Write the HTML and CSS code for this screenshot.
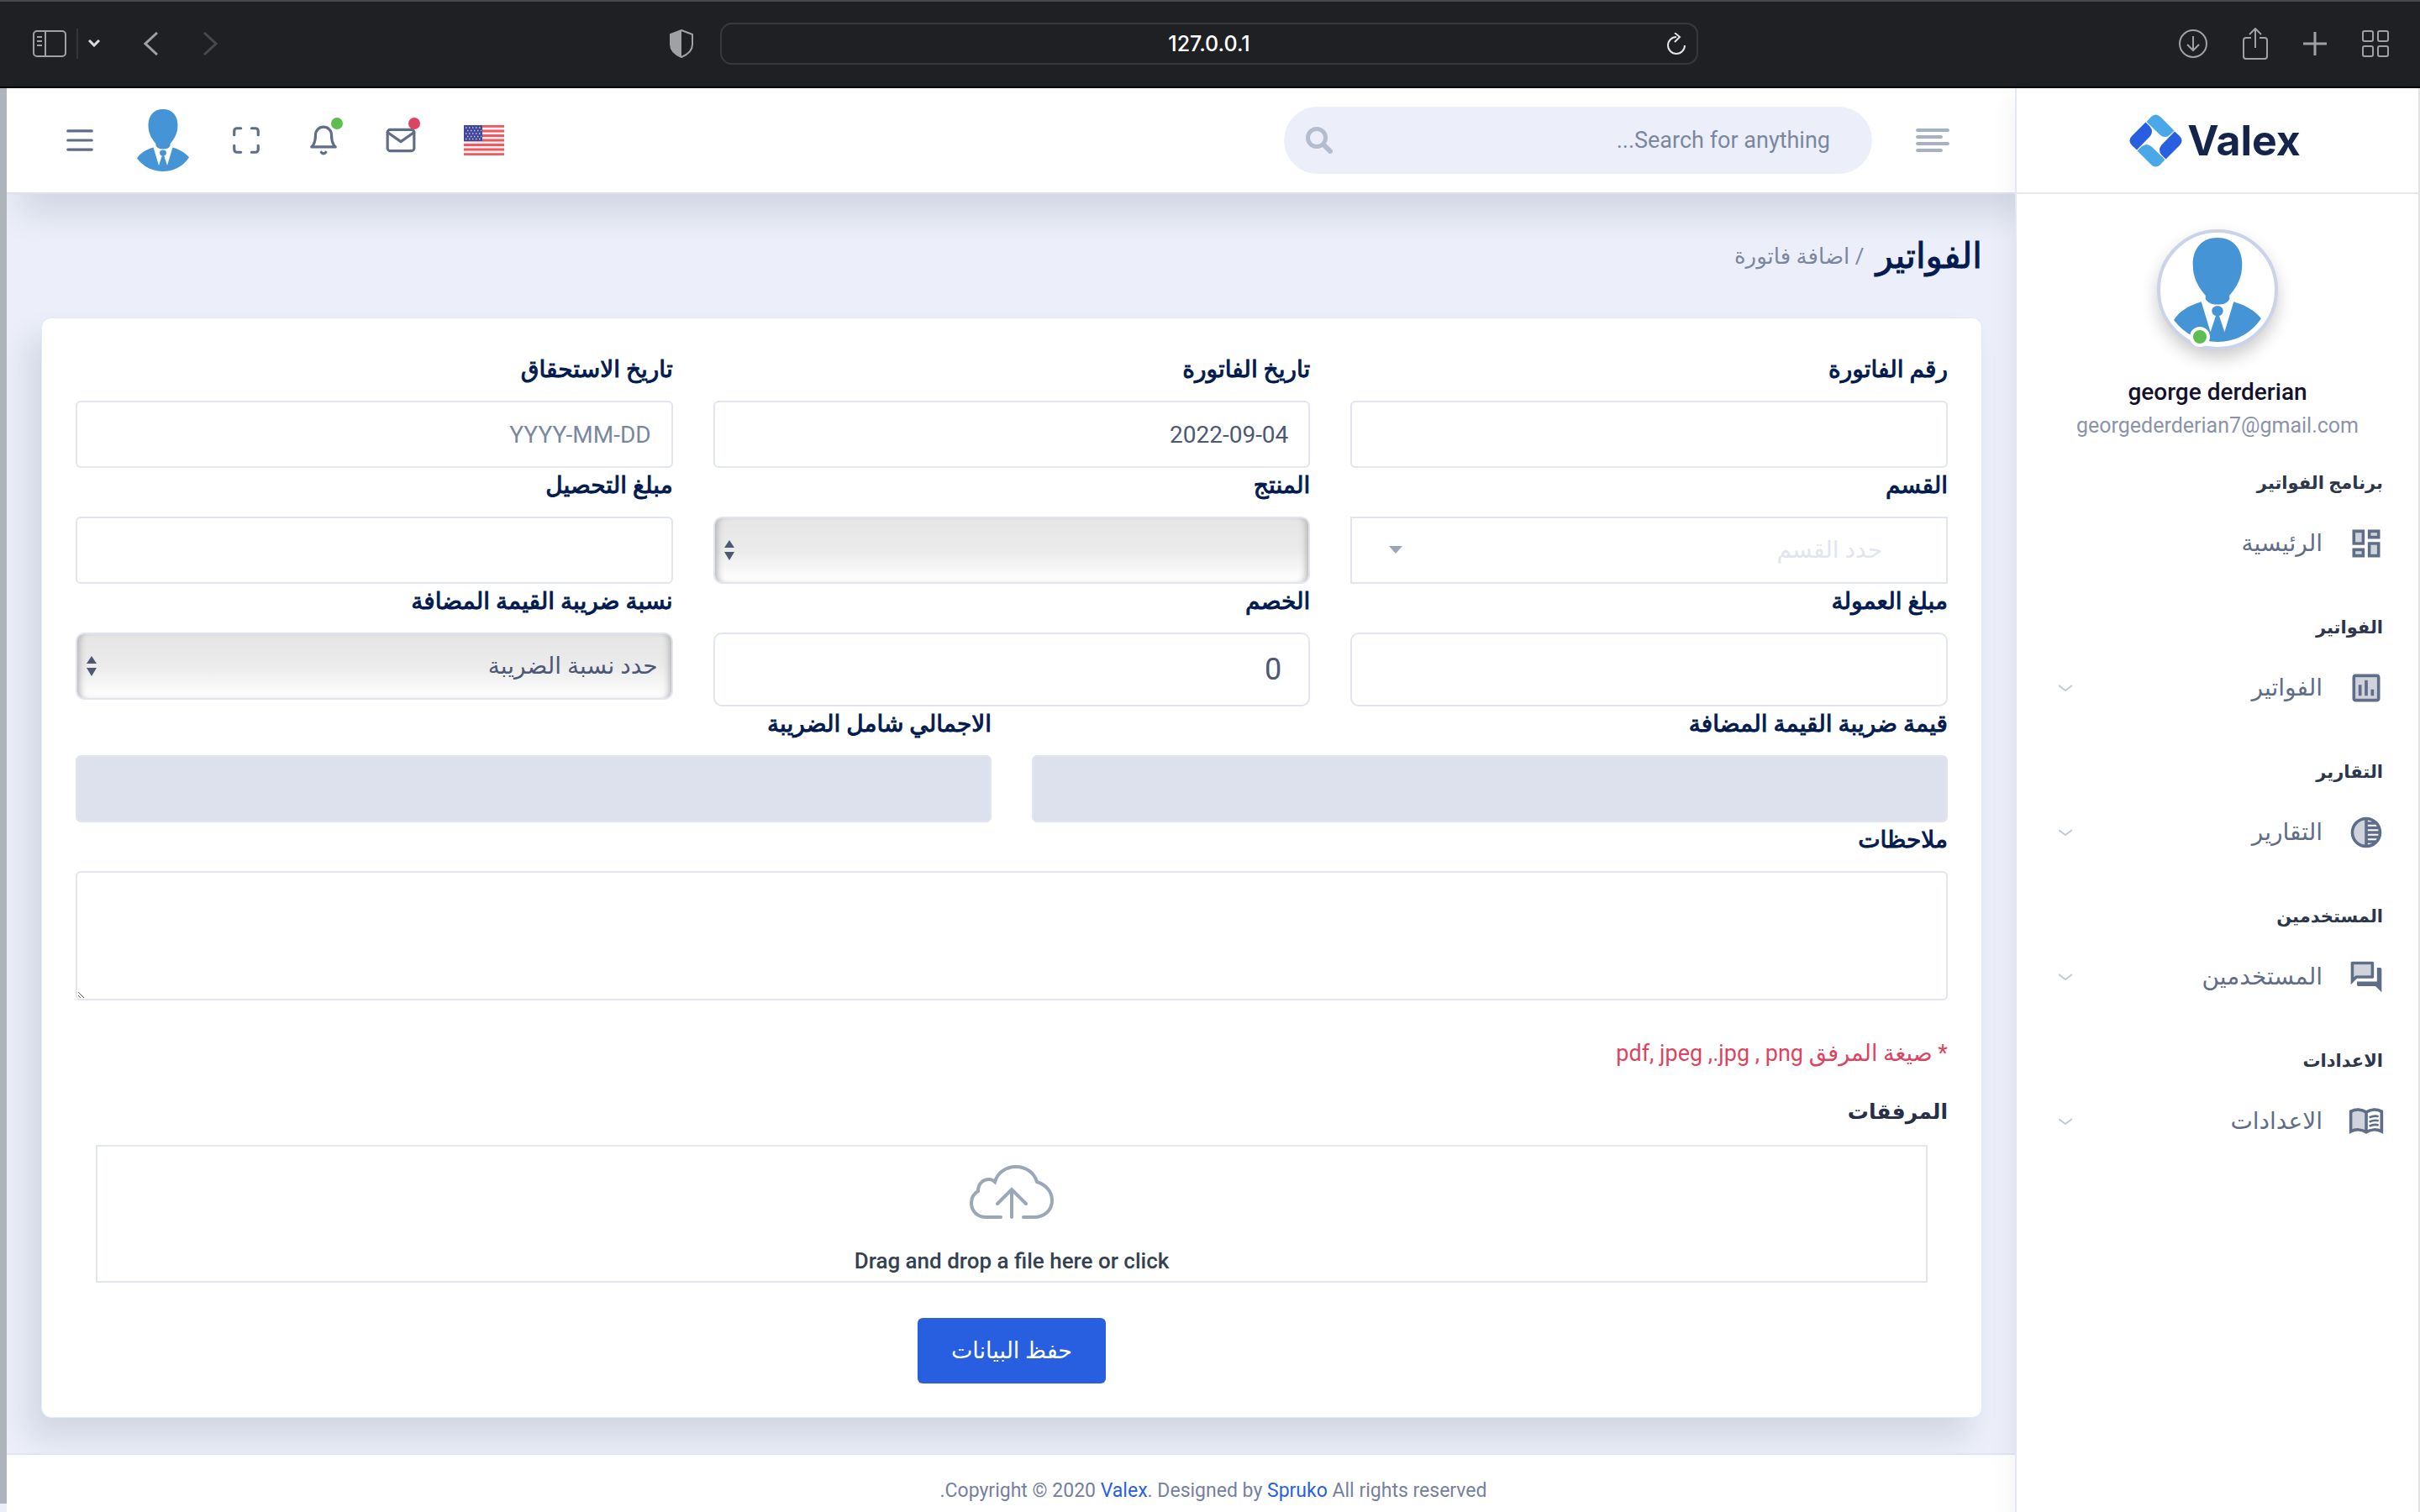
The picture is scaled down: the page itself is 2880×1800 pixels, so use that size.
FILE: index.html
```html
<!DOCTYPE html>
<html lang="ar" dir="rtl">
<head>
<meta charset="utf-8">
<meta name="viewport" content="width=device-width, initial-scale=1">
<title>اضافة فاتورة</title>
<link rel="stylesheet" href="styles.css">
</head>
<body>
<svg class="defs" aria-hidden="true">
  <defs>
    <symbol id="person" viewBox="0 0 62 74">
      <path fill="#4494d6" d="M31 0C42 0 48.500 7.500 48.500 19C48.500 28 45 35 39.500 41V43.500C38 46.500 35 47.500 31 47.500C27 47.500 24 46 22.500 43.500V41C17 35 13.500 28 13.500 19C13.500 7.500 20 0 31 0ZM19.500 45.500L26 67L29.800 55.500C28 55 27 53.500 27 52C27 50 28.500 48.500 31 48.500C33.500 48.500 35 50 35 52C35 53.500 34 55 32.200 55.500L36 67L42.500 45.500C51 48 58 52 62 57.500C54 69 43 74 31 74C19 74 8 69 0 58.500C4 52 11 48 19.500 45.500Z"/>
    </symbol>
    <symbol id="chevron" viewBox="0 0 16 8"><path fill="none" stroke="#c0cadb" stroke-width="2" d="M0 1L8 7L16 1"/></symbol>
    <symbol id="updown" viewBox="0 0 12 24"><path fill="#4d5875" d="M6 0L12 9H0ZM6 24L12 14H0Z"/></symbol>
  </defs>
</svg>

<div class="browser" dir="ltr">
  <div class="browser-start">
    <button class="bare" aria-label="Sidebar"><svg width="40" height="32" viewBox="0 0 40 32" fill="none" stroke="#a0a1a3" stroke-width="2"><rect x="1" y="1" width="38" height="30" rx="4"/><path d="M15 1V31M5 8H11M5 13H11M5 18H11"/></svg></button>
    <span class="browser-rule"></span>
    <button class="bare" aria-label="Tab groups"><svg width="14" height="9" viewBox="0 0 14 9" fill="none" stroke="#dcdcdd" stroke-width="3"><path d="M1 1L7 7L13 1"/></svg></button>
    <button class="bare back" aria-label="Back"><svg width="17" height="28" viewBox="0 0 17 28" fill="none" stroke="#a0a1a3" stroke-width="3"><path d="M16 1L2 14L16 27"/></svg></button>
    <button class="bare forward" aria-label="Forward"><svg width="17" height="28" viewBox="0 0 17 28" fill="none" stroke="#48494c" stroke-width="3"><path d="M1 1L15 14L1 27"/></svg></button>
  </div>
  <div class="browser-middle">
    <svg width="28" height="34" viewBox="0 0 28 34"><path fill="none" stroke="#a0a1a3" stroke-width="2" d="M14 1L27 6V18C27 26 21 30 14 33C7 30 1 26 1 18V6Z"/><path fill="#a0a1a3" d="M14 1V33C7 30 1 26 1 18V6Z"/></svg>
    <div class="address">
      <span>127.0.0.1</span>
      <button class="bare reload" aria-label="Reload"><svg width="24" height="26" viewBox="0 0 24 26" fill="none" stroke="#e4e4e5" stroke-width="2"><path d="M12 5A10 10 0 1 0 22 15M10 0L16 5L10 11"/></svg></button>
    </div>
  </div>
  <div class="browser-end">
    <button class="bare" aria-label="Downloads"><svg width="34" height="34" viewBox="0 0 34 34" fill="none" stroke="#a0a1a3" stroke-width="2"><circle cx="17" cy="17" r="16"/><path d="M17 8V25M10 18L17 25L24 18"/></svg></button>
    <button class="bare" aria-label="Share"><svg width="30" height="38" viewBox="0 0 30 38" fill="none" stroke="#a0a1a3" stroke-width="2"><path d="M10 12H4Q1 12 1 15V34Q1 37 4 37H26Q29 37 29 34V15Q29 12 26 12H20M15 24V2M8 8L15 1L22 8"/></svg></button>
    <button class="bare" aria-label="New tab"><svg width="28" height="28" viewBox="0 0 28 28" stroke="#a0a1a3" stroke-width="3"><path d="M14 0V28M0 14H28"/></svg></button>
    <button class="bare" aria-label="Tabs"><svg width="32" height="32" viewBox="0 0 32 32" fill="none" stroke="#a0a1a3" stroke-width="2"><rect x="1" y="1" width="12" height="12" rx="2"/><rect x="19" y="1" width="12" height="12" rx="2"/><rect x="1" y="19" width="12" height="12" rx="2"/><rect x="19" y="19" width="12" height="12" rx="2"/></svg></button>
  </div>
</div>

<div class="app">
  <aside class="sidebar">
    <a class="logo" href="#" dir="ltr">
      <svg width="63" height="63" viewBox="0 0 63 63">
        <path fill="#285fe0" d="M19.500 9.500L3 26Q-2 31.500 3 37L9 42.500L24.500 26.500Q29.500 20.500 24.500 14.500Z"/>
        <path fill="#4ba8e8" transform="rotate(90 31.500 31.500)" d="M19.500 9.500L3 26Q-2 31.500 3 37L9 42.500L24.500 26.500Q29.500 20.500 24.500 14.500Z"/>
        <path fill="#285fe0" transform="rotate(180 31.500 31.500)" d="M19.500 9.500L3 26Q-2 31.500 3 37L9 42.500L24.500 26.500Q29.500 20.500 24.500 14.500Z"/>
        <path fill="#4ba8e8" transform="rotate(270 31.500 31.500)" d="M19.500 9.500L3 26Q-2 31.500 3 37L9 42.500L24.500 26.500Q29.500 20.500 24.500 14.500Z"/>
      </svg>
      <span>Valex</span>
    </a>
    <div class="profile">
      <div class="portrait"><svg width="104" height="124"><use href="#person"/></svg><span class="online"></span></div>
      <strong>george derderian</strong>
      <span class="mail">georgederderian7@gmail.com</span>
    </div>
    <nav class="menu">
      <h3>برنامج الفواتير</h3>
      <a href="#"><svg class="menu-icon" viewBox="0 0 24 24"><path opacity=".3" d="M5 5h4v6H5zm10 8h4v6h-4zM5 17h4v2H5zM15 5h4v2h-4z"/><path d="M3 13h8V3H3v10zm2-8h4v6H5V5zm8 16h8V11h-8v10zm2-8h4v6h-4v-6zM13 3v6h8V3h-8zm6 4h-4V5h4v2zM3 21h8v-6H3v6zm2-4h4v2H5v-2z"/></svg><span>الرئيسية</span></a>
      <h3>الفواتير</h3>
      <a href="#"><svg class="menu-icon" viewBox="0 0 24 24"><path opacity=".3" d="M5 5h14v14H5z"/><path d="M19 3H5c-1.100 0-2 .9-2 2v14c0 1.100.9 2 2 2h14c1.100 0 2-.9 2-2V5c0-1.100-.9-2-2-2zm0 16H5V5h14v14zM7 10h2v7H7zm4-3h2v10h-2zm4 6h2v4h-2z"/></svg><span>الفواتير</span><svg class="chevron"><use href="#chevron"/></svg></a>
      <h3>التقارير</h3>
      <a href="#"><svg class="menu-icon" viewBox="0 0 24 24"><path opacity=".3" d="M4 12c0 4.070 3.060 7.440 7 7.930V4.070C7.050 4.560 4 7.930 4 12z"/><path d="M12 2C6.480 2 2 6.480 2 12s4.480 10 10 10 10-4.480 10-10S17.520 2 12 2zm-1 17.930C7.050 19.440 4 16.080 4 12s3.050-7.440 7-7.930v15.860zm2-15.860c1.030.13 2 .45 2.870.93H13v-.93zM13 7h5.240c.25.310.48.650.68 1H13V7zm0 3h6.740c.08.330.15.660.19 1H13v-1zm0 9.930V19h2.870c-.87.480-1.840.8-2.870.93zM18.240 17H13v-1h5.920c-.2.350-.43.690-.68 1zm1.500-3H13v-1h6.930c-.04.340-.11.670-.19 1z"/></svg><span>التقارير</span><svg class="chevron"><use href="#chevron"/></svg></a>
      <h3>المستخدمين</h3>
      <a href="#"><svg class="menu-icon" viewBox="0 0 24 24"><path opacity=".3" d="M15 11V4H4v8.170L5.170 11H6z"/><path d="M21 6h-2v9H6v2c0 .55.45 1 1 1h11l4 4V7c0-.55-.45-1-1-1zm-5 7c.55 0 1-.45 1-1V3c0-.55-.45-1-1-1H3c-.55 0-1 .45-1 1v14l4-4h10zM4 12.170V4h11v7H5.170L4 12.170z"/></svg><span>المستخدمين</span><svg class="chevron"><use href="#chevron"/></svg></a>
      <h3>الاعدادات</h3>
      <a href="#"><svg class="menu-icon" viewBox="0 0 24 24"><path opacity=".3" d="M3 6C6 5 9 5 11 6.500V18C9 17 6 17 3 18Z"/><path fill="none" stroke="#5f6d88" stroke-width="2" d="M2 5.500C5 4 9 4 12 6C15 4 19 4 22 5.500V18.500C19 17 15 17 12 19C9 17 5 17 2 18.500ZM12 6V19"/><path fill="none" stroke="#5f6d88" stroke-width="1.400" d="M14 9.500Q17 8 20 8.800M14 12.300Q17 10.800 20 11.600M14 15.100Q17 13.600 20 14.400"/></svg><span>الاعدادات</span><svg class="chevron"><use href="#chevron"/></svg></a>
    </nav>
  </aside>

  <div class="main">
    <header class="topbar">
      <div class="topbar-search">
        <button class="bare" aria-label="Toggle menu"><svg width="40" height="28" viewBox="0 0 40 28" stroke="#a8b0c7" stroke-width="4" stroke-linecap="round"><path d="M2 2H38M2 10H30M2 18H38M2 26H30"/></svg></button>
        <form class="search">
          <input type="search" aria-label="Search" placeholder="Search for anything...">
          <button class="bare" type="button" aria-label="Search"><svg width="32" height="32" viewBox="0 0 32 32" fill="none" stroke="#b4bdce"><circle cx="13" cy="13" r="10.500" stroke-width="5"/><path stroke-width="6" stroke-linecap="round" d="M22 22L29 29"/></svg></button>
        </form>
      </div>
      <div class="topbar-tools">
        <button class="bare tool-wide" aria-label="Language"><svg width="48" height="36" viewBox="0 0 48 36"><path fill="#fbf3f5" d="M0 0H48V36H0Z"/><path stroke="#f0585e" stroke-width="2.800" d="M0 1.400H48M0 7H48M0 12.500H48M0 18H48M0 23.500H48M0 29H48M0 34.600H48"/><path fill="#41479b" d="M0 0H22V19H0Z"/><path stroke="#c9cbe6" stroke-width="1.500" stroke-dasharray="1.500 2.500" d="M2 3H21M4 6.500H21M2 10H21M4 13.500H21M2 16.500H21"/></svg></button>
        <button class="bare tool" aria-label="Messages"><svg class="feather" viewBox="0 0 24 24"><path d="M4 4h16c1.100 0 2 .9 2 2v12c0 1.100-.9 2-2 2H4c-1.100 0-2-.9-2-2V6c0-1.100.9-2 2-2z"/><path d="M22 6l-10 7L2 6"/></svg><span class="dot dot-red"></span></button>
        <button class="bare tool" aria-label="Notifications"><svg class="feather" viewBox="0 0 24 24"><path d="M18 8A6 6 0 0 0 6 8c0 7-3 9-3 9h18s-3-2-3-9M13.730 21a2 2 0 0 1-3.460 0"/></svg><span class="dot dot-green"></span></button>
        <button class="bare tool" aria-label="Full screen"><svg class="feather" viewBox="0 0 24 24"><path d="M8 3H5a2 2 0 0 0-2 2v3m18 0V5a2 2 0 0 0-2-2h-3m0 18h3a2 2 0 0 0 2-2v-3M3 16v3a2 2 0 0 0 2 2h3"/></svg></button>
        <button class="bare tool-wide" aria-label="Account"><svg width="62" height="74"><use href="#person"/></svg></button>
        <button class="bare tool" aria-label="Panel"><svg class="feather" viewBox="0 0 24 24"><path d="M3 12h18M3 5h18M3 19h18"/></svg></button>
      </div>
    </header>

    <main class="content">
      <div class="heading"><h1>الفواتير</h1><span>/ اضافة فاتورة</span></div>
      <form class="card">
        <div class="row three">
          <div class="field"><label for="number">رقم الفاتورة</label><input id="number" type="text"></div>
          <div class="field"><label for="date">تاريخ الفاتورة</label><input id="date" type="text" value="2022-09-04"></div>
          <div class="field"><label for="due">تاريخ الاستحقاق</label><input id="due" type="text" placeholder="YYYY-MM-DD"></div>
        </div>
        <div class="row three">
          <div class="field"><label for="section">القسم</label><div class="pick"><select id="section" class="section"><option>حدد القسم</option></select><svg class="caret" viewBox="0 0 16 9"><path fill="#99a6b5" d="M0 0H16L8 9Z"/></svg></div></div>
          <div class="field"><label for="product">المنتج</label><div class="pick"><select id="product" class="shaded"><option></option></select><svg class="updown"><use href="#updown"/></svg></div></div>
          <div class="field"><label for="collection">مبلغ التحصيل</label><input id="collection" type="text"></div>
        </div>
        <div class="row three">
          <div class="field"><label for="commission">مبلغ العمولة</label><input id="commission" class="large" type="text"></div>
          <div class="field"><label for="discount">الخصم</label><input id="discount" class="large" type="text" value="0"></div>
          <div class="field"><label for="rate">نسبة ضريبة القيمة المضافة</label><div class="pick"><select id="rate" class="shaded"><option>حدد نسبة الضريبة</option></select><svg class="updown"><use href="#updown"/></svg></div></div>
        </div>
        <div class="row two">
          <div class="field"><label for="vat">قيمة ضريبة القيمة المضافة</label><input id="vat" type="text" readonly></div>
          <div class="field"><label for="total">الاجمالي شامل الضريبة</label><input id="total" type="text" readonly></div>
        </div>
        <div class="field"><label for="note">ملاحظات</label><textarea id="note"></textarea></div>
        <p class="formats">* صيغة المرفق pdf, jpeg ,.jpg , png</p>
        <h2>المرفقات</h2>
        <button class="dropzone" type="button">
          <svg width="100" height="65" viewBox="0 0 100 65" fill="none" stroke="#9aa7b6" stroke-width="4" stroke-linecap="round"><path d="M37 62H20C8 62 2 54 2 45C2 39 5 34 10 31C10 22 16 17 23 17C26 17 28 18 30 20C33 9 43 2 55 2C67 2 77 9 80 20C90 23 98 31 98 42C98 54 89 62 76 62H64M50 62V29M33 46L50 29L67 46"/></svg>
          <span>Drag and drop a file here or click</span>
        </button>
        <button class="save" type="button">حفظ البيانات</button>
      </form>
    </main>

    <footer class="footer" dir="ltr">.Copyright © 2020 <a href="#">Valex</a>. Designed by <a href="#">Spruko</a> All rights reserved</footer>
  </div>
  <div class="scroll-track"><div class="scroll-thumb"></div></div>
</div>
</body>
</html>
```
FILE: styles.css
```css
* { box-sizing: border-box; }
body {
  margin: 0;
  min-height: 100vh;
  display: flex;
  flex-direction: column;
  background: #eceff9;
  color: #031b4e;
  font: 400 28px/42px Roboto, "DejaVu Sans", sans-serif;
}
svg { display: block; flex: none; }
a { text-decoration: none; }
h1, h2, h3, p { margin: 0; }
.defs { position: absolute; width: 0; height: 0; }
input, select, textarea, button { font: inherit; color: inherit; }
.bare { border: 0; padding: 0; background: none; display: flex; align-items: center; justify-content: center; }

/* Browser bar */
.browser {
  display: grid;
  grid-template-columns: 758fr 1224fr 822fr;
  align-items: center;
  height: 105px;
  padding: 0 37px 2px 39px;
  background: #1f2023;
  border-top: 2px solid #47494d;
  border-bottom: 2px solid #000;
}
.browser-start, .browser-middle, .browser-end { display: flex; align-items: center; }
.browser-start { gap: 12px; }
.browser-rule { width: 2px; height: 36px; background: #343538; }
.back { margin-left: 40px; }
.forward { margin-left: 42px; }
.browser-middle { gap: 32px; }
.browser-end { justify-content: flex-end; gap: 42px; }
.address {
  flex: 1;
  display: flex;
  align-items: center;
  justify-content: center;
  position: relative;
  height: 50px;
  border: 2px solid #38393c;
  border-radius: 14px;
  color: #fff;
  font: 500 25px/32px Inter, sans-serif;
}
.reload { position: absolute; right: 12px; }

/* Page frame */
.app { flex: 1; display: flex; background: #fff; }
.scroll-track { width: 8px; flex: none; background: #eceff9; padding-bottom: 10px; }
.scroll-thumb { height: 100%; background: #afb3bc; }
.main { flex: 1; min-width: 0; display: flex; flex-direction: column; background: #eceff9; }

/* Sidebar */
.sidebar {
  width: 482px;
  flex: none;
  position: relative;
  z-index: 2;
  background: #fff;
  border-right: 2px solid #e3e3e6;
  border-left: 2px solid #e4e7f1;
  box-shadow: 0 16px 30px rgba(42, 49, 82, .08);
}
.logo {
  display: flex;
  align-items: center;
  justify-content: center;
  gap: 6px;
  height: 126px;
  padding-right: 6px;
  border-bottom: 2px solid #e6e7f0;
  color: #14244a;
  font: 700 50px/60px Inter, sans-serif;
}
.profile { display: flex; flex-direction: column; align-items: center; padding: 42px 0 28px; text-align: center; }
.portrait {
  position: relative;
  display: flex;
  align-items: center;
  justify-content: center;
  width: 144px;
  height: 144px;
  margin-bottom: 28px;
  border: 4px solid #ccd2e8;
  border-radius: 50%;
  background: #fff;
  box-shadow: 0 10px 20px rgba(0, 0, 0, .2);
}
.online { position: absolute; left: 35px; bottom: 0; width: 24px; height: 24px; border: 4px solid #fff; border-radius: 50%; background: #5dbd4f; }
.profile strong { color: #14112d; font-weight: 500; line-height: 44px; }
.mail { color: #8c93a8; font-size: 25px; line-height: 36px; }
.menu h3 { padding: 0 42px; color: #2c364c; font-size: 21px; font-weight: 700; line-height: 44px; }
.menu a { display: flex; align-items: center; height: 64px; margin: 18px 0 46px; padding: 0 40px 0 50px; color: #5f6d88; }
.menu-icon { width: 44px; height: 44px; margin-left: 30px; fill: #5f6d88; }
.chevron { width: 16px; height: 8px; margin-right: auto; }

/* Header */
.topbar {
  display: flex;
  align-items: center;
  justify-content: space-between;
  height: 126px;
  padding: 0 78px 0 65px;
  background: #fff;
  border-bottom: 2px solid #dee2ee;
  box-shadow: 16px 24px 36px rgba(25, 42, 70, .12);
}
.topbar-search { display: flex; align-items: center; gap: 52px; }
.search { display: flex; align-items: center; width: 700px; height: 80px; padding: 0 50px 0 26px; border-radius: 40px; background: #eceff9; }
.search input { flex: 1; min-width: 0; border: 0; padding: 0; outline: 0; background: none; font-size: 27px; }
::placeholder { color: #7987a1; opacity: 1; }
.topbar-tools { display: flex; align-items: center; gap: 48px; }
.tool { position: relative; width: 44px; height: 44px; }
.tool-wide { width: 58px; }
.feather { width: 38px; height: 38px; fill: none; stroke: #5f6d88; stroke-width: 2; stroke-linecap: round; stroke-linejoin: round; }
.dot { position: absolute; top: -5px; right: -1px; width: 14px; height: 14px; border-radius: 50%; }
.dot-red { background: #dc4462; }
.dot-green { background: #5dbd4f; }

/* Invoice form */
.content { flex: 1; padding: 0 39px 42px 41px; }
.heading { display: flex; align-items: center; gap: 14px; height: 147px; }
.heading h1 { font-size: 42px; font-weight: 400; line-height: 60px; -webkit-text-stroke: 1px #031b4e; }
.heading span { color: #7b86a0; font-size: 26px; }
.card {
  display: flex;
  flex-direction: column;
  padding: 40px;
  background: #fff;
  border: 1px solid #deebfd;
  border-radius: 12px;
  box-shadow: -16px 24px 36px rgba(25, 42, 70, .12);
}
.row { display: grid; gap: 48px; }
.three { grid-template-columns: repeat(3, 1fr); }
.two { grid-template-columns: repeat(2, 1fr); }
.field { display: flex; flex-direction: column; }
.field label { margin-bottom: 16px; -webkit-text-stroke: 1px #031b4e; }
.field input, .field select, .field textarea {
  width: 100%;
  height: 80px;
  padding: 0 24px;
  border: 2px solid #e1e5ef;
  border-radius: 6px;
  background: #fff;
  color: #4d5875;
}
.field .large { height: 88px; padding: 0 32px; border-radius: 10px; font-size: 36px; }
.field input[readonly] { background: #dde1ed; }
.field textarea { height: 154px; }
.field select { appearance: none; }
.field .section { padding: 0 76px; border-radius: 0; color: #e1e5ef; }
.field .shaded {
  padding: 0 16px;
  border-radius: 10px;
  background: linear-gradient(#e6e6e6, #ebebeb 50%, #fff);
  box-shadow: inset 8px 0 8px -6px #aaa, inset -8px 0 8px -6px #aaa;
}
.pick { position: relative; }
.caret { position: absolute; left: 46px; top: 35px; width: 16px; height: 9px; }
.updown { position: absolute; left: 13px; top: 28px; width: 12px; height: 24px; }
.formats { margin-top: 42px; color: #dc4462; font-size: 27px; }
.card h2 { margin: 28px 0 18px; color: #283049; font-size: 25px; font-weight: 700; line-height: 42px; }
.dropzone {
  display: flex;
  flex-direction: column;
  align-items: center;
  gap: 28px;
  height: 164px;
  margin: 0 24px 42px;
  padding: 22px 0 0;
  border: 2px solid #e1e5ef;
  background: #fff;
  color: #334151;
  font-size: 26px;
  font-weight: 500;
  line-height: 42px;
}
.save { align-self: center; height: 78px; padding: 0 40px; border: 0; border-radius: 6px; background: #285fe0; color: #fff; font-size: 27px; }

/* The footer text is centred on the window, so it clears the sidebar's width on the left too */
.footer { height: 70px; padding: 22px 0 0 482px; border-top: 2px solid #e1e5f1; background: #fff; color: #7580a0; font-size: 23px; text-align: center; }
.footer a { color: #285fe0; }
```
